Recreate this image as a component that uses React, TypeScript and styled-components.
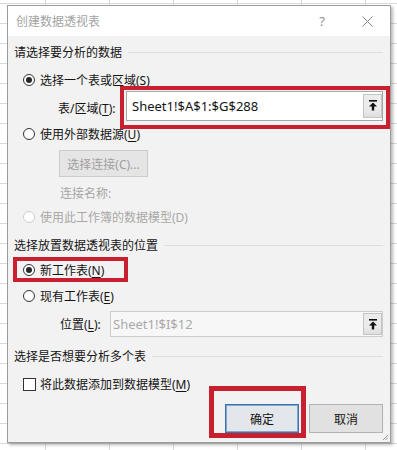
import React from "react";
import styled, { createGlobalStyle, css } from "styled-components";

const GlobalStyle = createGlobalStyle`
  html, body {
    margin: 0;
    padding: 0;
  }
  body {
    width: 397px;
    height: 450px;
    overflow: hidden;
    font-family: "Noto Sans", "Noto Sans CJK SC", sans-serif;
    font-size: 12px;
    color: #141414;
    background-color: #ffffff;
    background-image:
      linear-gradient(to bottom, #d9d9d9 1px, transparent 1px),
      linear-gradient(to right, #d9d9d9 1px, transparent 1px);
    background-size: 64px 20px, 64px 20px;
    background-position: 0 3px, 45px 0;
  }
`;

const Dialog = styled.div`
  position: relative;
  box-sizing: border-box;
  margin: 5px 0 0 7px;
  width: 384px;
  height: 438px;
  border: 1px solid #9c9c9c;
  background: #f3f2f2;
  box-shadow: 2px 2px 3px rgba(0, 0, 0, 0.28);
  display: flex;
  flex-direction: column;
`;

const TitleBar = styled.div`
  height: 30px;
  flex: none;
  background: #ffffff;
  display: flex;
  align-items: center;
  padding-left: 8px;
`;

const TitleText = styled.span`
  color: #a3a3a3;
  font-size: 12px;
  flex: 1;
`;

const TitleButton = styled.span`
  width: 20px;
  display: flex;
  justify-content: center;
  align-items: center;
  color: #8e8e8e;
  font-size: 13px;
`;

const HelpButton = styled(TitleButton)`
  margin-right: 25px;
`;

const CloseButton = styled(TitleButton)`
  margin-right: 13px;
`;

const Body = styled.div`
  flex: 1;
  display: flex;
  flex-direction: column;
  padding: 0 7px 0 6px;
`;

const SectionHeader = styled.div<{ $mt: number }>`
  margin-top: ${(p) => p.$mt}px;
  height: 16px;
  display: flex;
  align-items: center;
  white-space: nowrap;
  &::after {
    content: "";
    flex: 1;
    height: 1px;
    margin-left: 6px;
    background: #dedcdc;
  }
`;

const RadioRow = styled.div<{ $mt?: number; $disabled?: boolean }>`
  margin-top: ${(p) => p.$mt ?? 0}px;
  margin-left: 9px;
  height: 16px;
  display: flex;
  align-items: center;
  gap: 5px;
  white-space: nowrap;
  color: ${(p) => (p.$disabled ? "#a8a8a8" : "#141414")};
`;

const RadioCircle = styled.span<{ $checked?: boolean; $disabled?: boolean }>`
  box-sizing: border-box;
  width: 12px;
  height: 12px;
  border-radius: 50%;
  border: 1px solid ${(p) => (p.$disabled ? "#cfcfcf" : "#333333")};
  background: #ffffff;
  display: flex;
  align-items: center;
  justify-content: center;
  ${(p) =>
    p.$checked &&
    css`
      &::after {
        content: "";
        width: 6px;
        height: 6px;
        border-radius: 50%;
        background: #262626;
      }
    `}
`;

const Key = styled.span`
  text-decoration: underline;
  text-underline-offset: 2px;
`;

const FieldRow = styled.div<{ $mt: number; $h: number }>`
  margin-top: ${(p) => p.$mt}px;
  height: ${(p) => p.$h}px;
  display: flex;
  align-items: center;
  white-space: nowrap;
`;

const FieldLabel = styled.span<{ $ml: number; $w: number }>`
  margin-left: ${(p) => p.$ml}px;
  width: ${(p) => p.$w}px;
  flex: none;
`;

const RangeHighlight = styled.div`
  box-sizing: border-box;
  flex: 1;
  height: 43px;
  margin-right: -7px;
  border: 4px solid #c8202e;
  padding: 1px 3px 4px 2px;
  display: flex;
`;

const InputBox = styled.div<{ $disabled?: boolean; $pl: number }>`
  box-sizing: border-box;
  flex: 1;
  height: 100%;
  display: flex;
  align-items: center;
  padding-left: ${(p) => p.$pl}px;
  border: 1px solid ${(p) => (p.$disabled ? "#cdcdcd" : "#a6a6a6")};
  background: ${(p) => (p.$disabled ? "#f8f7f7" : "#ffffff")};
  color: ${(p) => (p.$disabled ? "#a9a9a9" : "#141414")};
  font-size: 13px;
`;

const InputText = styled.span`
  flex: 1;
`;

const UploadButton = styled.span<{ $h: number }>`
  box-sizing: border-box;
  width: 19px;
  height: ${(p) => p.$h}px;
  display: flex;
  align-items: flex-start;
  justify-content: center;
  padding-top: 5px;
  background: linear-gradient(to bottom, #ececec 60%, #dedede 100%);
  border: 1px solid #c4c4c4;
`;

const ConnectButton = styled.div`
  box-sizing: border-box;
  margin-top: 8px;
  margin-left: 45px;
  width: 89px;
  height: 27px;
  display: flex;
  align-items: center;
  justify-content: center;
  background: #e6e5e5;
  border: 1px solid #cbcbcb;
  color: #a0a0a0;
`;

const MutedLine = styled.div`
  margin-top: 8px;
  margin-left: 46px;
  height: 16px;
  display: flex;
  align-items: center;
  color: #a6a6a6;
`;

const OptionHighlight = styled.div`
  box-sizing: border-box;
  margin-top: 4px;
  margin-left: -1px;
  width: 115px;
  height: 25px;
  border: 4px solid #c8202e;
  display: flex;
  align-items: center;
  & > ${RadioRow} {
    margin-left: 6px;
  }
`;

const CheckRow = styled.div`
  margin-top: 12px;
  margin-left: 9px;
  height: 16px;
  display: flex;
  align-items: center;
  gap: 4px;
  white-space: nowrap;
`;

const CheckBox = styled.span`
  box-sizing: border-box;
  width: 13px;
  height: 13px;
  border: 1px solid #333333;
  background: #ffffff;
`;

const Footer = styled.div`
  margin-top: -6px;
  display: flex;
  justify-content: flex-end;
  align-items: flex-end;
  gap: 3px;
`;

const OkHighlight = styled.div`
  box-sizing: border-box;
  width: 97px;
  height: 52px;
  border: 5px solid #c8202e;
  padding: 13px 2px 0 11px;
  display: flex;
`;

const DialogButton = styled.button<{ $primary?: boolean }>`
  box-sizing: border-box;
  width: 74px;
  height: 29px;
  margin: 0 0 ${(p) => (p.$primary ? 0 : 5)}px 0;
  padding: 0;
  font-family: inherit;
  font-size: 12px;
  color: #141414;
  background: ${(p) => (p.$primary ? "#e3e6ea" : "#e2e1e1")};
  border: 1px solid ${(p) => (p.$primary ? "#3b74ad" : "#b3b3b3")};
  box-shadow: ${(p) => (p.$primary ? "inset 0 0 0 1px #7ea7cf" : "none")};
`;

const Grip = styled.svg`
  position: absolute;
  right: 1px;
  bottom: 1px;
`;

const UploadIcon = () => (
  <svg width="10" height="11" viewBox="0 0 10 11">
    <rect x="1" y="0" width="8" height="1.6" fill="#111" />
    <path d="M5 2.4 L9 6.6 L6.2 6.6 L6.2 10.5 L3.8 10.5 L3.8 6.6 L1 6.6 Z" fill="#111" />
  </svg>
);

const CloseIcon = () => (
  <svg width="11" height="11" viewBox="0 0 11 11">
    <path d="M0.5 0.5 L10.5 10.5 M10.5 0.5 L0.5 10.5" stroke="#8a8a8a" strokeWidth="1" />
  </svg>
);

export default function App() {
  return (
    <>
      <GlobalStyle />
      <Dialog>
        <TitleBar>
          <TitleText>创建数据透视表</TitleText>
          <HelpButton>?</HelpButton>
          <CloseButton>
            <CloseIcon />
          </CloseButton>
        </TitleBar>
        <Body>
          <SectionHeader $mt={8}>请选择要分析的数据</SectionHeader>
          <RadioRow $mt={12}>
            <RadioCircle $checked />
            <span>
              选择一个表或区域(<Key>S</Key>)
            </span>
          </RadioRow>
          <FieldRow $mt={-2} $h={43}>
            <FieldLabel $ml={44} $w={62}>
              表/区域(<Key>T</Key>):
            </FieldLabel>
            <RangeHighlight>
              <InputBox $pl={5}>
                <InputText>Sheet1!$A$1:$G$288</InputText>
                <UploadButton $h={24}>
                  <UploadIcon />
                </UploadButton>
              </InputBox>
            </RangeHighlight>
          </FieldRow>
          <RadioRow $mt={-3}>
            <RadioCircle />
            <span>
              使用外部数据源(<Key>U</Key>)
            </span>
          </RadioRow>
          <ConnectButton>选择连接(C)...</ConnectButton>
          <MutedLine>连接名称:</MutedLine>
          <RadioRow $mt={8} $disabled>
            <RadioCircle $disabled />
            <span>使用此工作簿的数据模型(D)</span>
          </RadioRow>
          <SectionHeader $mt={12}>选择放置数据透视表的位置</SectionHeader>
          <OptionHighlight>
            <RadioRow>
              <RadioCircle $checked />
              <span>
                新工作表(<Key>N</Key>)
              </span>
            </RadioRow>
          </OptionHighlight>
          <RadioRow $mt={6}>
            <RadioCircle />
            <span>
              现有工作表(<Key>E</Key>)
            </span>
          </RadioRow>
          <FieldRow $mt={7} $h={26}>
            <FieldLabel $ml={46} $w={50}>
              位置(<Key>L</Key>):
            </FieldLabel>
            <InputBox $disabled $pl={2}>
              <InputText>Sheet1!$I$12</InputText>
              <UploadButton $h={22}>
                <UploadIcon />
              </UploadButton>
            </InputBox>
          </FieldRow>
          <SectionHeader $mt={11}>选择是否想要分析多个表</SectionHeader>
          <CheckRow>
            <CheckBox />
            <span>
              将此数据添加到数据模型(<Key>M</Key>)
            </span>
          </CheckRow>
          <Footer>
            <OkHighlight>
              <DialogButton $primary>确定</DialogButton>
            </OkHighlight>
            <DialogButton>取消</DialogButton>
          </Footer>
        </Body>
        <Grip width="7" height="7" viewBox="0 0 7 7">
          <path d="M6 1 L1 6 M6 3.5 L3.5 6" stroke="#9a9a9a" strokeWidth="1" />
        </Grip>
      </Dialog>
    </>
  );
}
